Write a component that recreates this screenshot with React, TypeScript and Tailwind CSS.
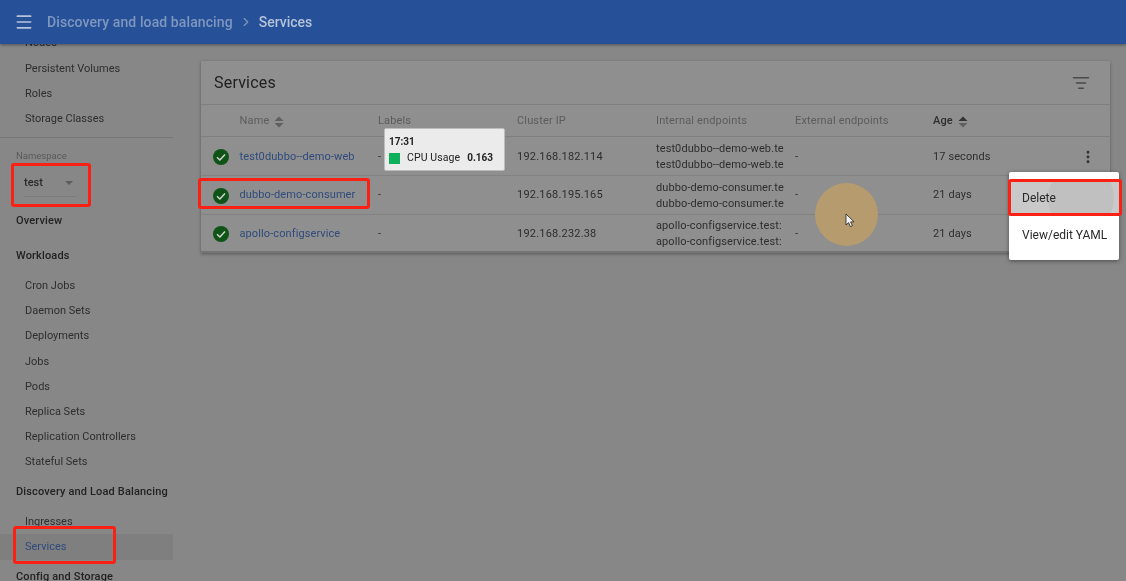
import React from "react";
import { Menu, ChevronRight, ListFilter, EllipsisVertical } from "lucide-react";

const clusterItems = ["Nodes", "Persistent Volumes", "Roles", "Storage Classes"];
const workloadItems = [
  "Cron Jobs",
  "Daemon Sets",
  "Deployments",
  "Jobs",
  "Pods",
  "Replica Sets",
  "Replication Controllers",
  "Stateful Sets",
];

const services = [
  {
    name: "test0dubbo--demo-web",
    ip: "192.168.182.114",
    endpoints: ["test0dubbo--demo-web.te", "test0dubbo--demo-web.te"],
    age: "17 seconds",
  },
  {
    name: "dubbo-demo-consumer",
    ip: "192.168.195.165",
    endpoints: ["dubbo-demo-consumer.te", "dubbo-demo-consumer.te"],
    age: "21 days",
  },
  {
    name: "apollo-configservice",
    ip: "192.168.232.38",
    endpoints: ["apollo-configservice.test:", "apollo-configservice.test:"],
    age: "21 days",
  },
];

const NavItem = ({ label, active }: { label: string; active?: boolean }) => (
  <div
    className={`h-[25.2px] pl-[25px] flex items-center text-[11px] ${
      active ? "bg-[#7f7f7f] text-[#2f4b7c]" : "text-[#2e2e2e]"
    }`}
  >
    {label}
  </div>
);

const NavTitle = ({ label, className }: { label: string; className: string }) => (
  <div className={`pl-[16px] flex items-center text-[11px] font-medium tracking-[0.15px] text-[#222] ${className}`}>
    {label}
  </div>
);

const SortIcon = ({ dark }: { dark?: boolean }) => (
  <svg width="10" height="12" viewBox="0 0 10 12" className="ml-[5px]">
    <path d="M5 0.5 L9.5 5 L0.5 5 Z" fill={dark ? "#333" : "#5f5f5f"} />
    <path d="M5 11.5 L9.5 7 L0.5 7 Z" fill="#5f5f5f" />
  </svg>
);

const StatusIcon = () => (
  <svg width="16" height="16" viewBox="0 0 16 16">
    <circle cx="8" cy="8" r="8" fill="#0f5416" />
    <path d="M4 8.3 L6.9 11 L12 5.6" fill="none" stroke="#d8d8d8" strokeWidth="1.4" />
  </svg>
);

const RedBox = ({ className }: { className: string }) => (
  <div className={`absolute border-[3px] border-[#fb2014] rounded-[3px] ${className}`} />
);

const gridCols = "grid grid-cols-[38.5px_138.5px_139px_139px_139px_138px_1fr]";

const App: React.FC = () => {
  return (
    <div className="relative w-[1126px] h-[581px] overflow-hidden bg-[#878787] font-['Roboto',sans-serif] blur-[0.4px]">
      {/* Top bar */}
      <header className="relative z-10 h-[44px] bg-[#265097] flex items-center shadow-[0_1px_3px_rgba(0,0,0,0.4)]">
        <Menu className="w-[20px] h-[20px] ml-[14px] text-[#b5c3da]" strokeWidth={2} />
        <span className="ml-[13px] text-[14px] font-medium text-[#7f97bf] tracking-[0.1px]">
          Discovery and load balancing
        </span>
        <ChevronRight className="w-[14px] h-[14px] mx-[6px] text-[#7f97bf]" />
        <span className="text-[14px] font-medium text-[#b5c3da]">Services</span>
      </header>

      <div className="flex h-[537px]">
        {/* Sidebar */}
        <nav className="w-[173px] shrink-0 overflow-hidden -mt-[13px]">
          <div>
            {clusterItems.map((item) => (
              <NavItem key={item} label={item} />
            ))}
          </div>
          <div className="mt-[5px] border-t border-[#777]" />
          <div className="pl-[16px] mt-[12px] text-[9.5px] leading-[12px] text-[#5a5a5a]">Namespace</div>
          <div className="ml-[24px] mt-[9px] w-[52px] h-[26px] border-b border-[#7c7c7c] flex items-center justify-between pr-[2px]">
            <span className="text-[11px] font-medium text-[#2a2a2a]">test</span>
            <span className="w-0 h-0 mr-[1px] border-x-[4px] border-x-transparent border-t-[4px] border-t-[#5c5c5c]" />
          </div>
          <NavTitle label="Overview" className="h-[25px] mt-[12px]" />
          <NavTitle label="Workloads" className="h-[25px] mt-[10px]" />
          <div className="mt-[5px]">
            {workloadItems.map((item) => (
              <NavItem key={item} label={item} />
            ))}
          </div>
          <NavTitle label="Discovery and Load Balancing" className="h-[25px] mt-[4px]" />
          <div className="mt-[5px]">
            <NavItem label="Ingresses" />
            <NavItem label="Services" active />
          </div>
          <NavTitle label="Config and Storage" className="h-[25px] mt-[5px]" />
        </nav>

        {/* Main content */}
        <main className="flex-1 pl-[28px] pr-[16px] pt-[17px]">
          <section className="bg-[#8f8f8f] shadow-[0_1px_3px_rgba(0,0,0,0.35)]">
            <div className="h-[44px] pl-[13px] pr-[20px] flex items-center justify-between border-b border-[#7f7f7f]">
              <h2 className="text-[16px] text-[#1e1e1e] tracking-[0.2px]">Services</h2>
              <ListFilter className="w-[18px] h-[18px] text-[#4a4a4a]" strokeWidth={2} />
            </div>
            <div className={`${gridCols} h-[32px] pt-[2px] items-center border-b border-[#7f7f7f] text-[11px] text-[#5c5c5c] tracking-[0.15px]`}>
              <span />
              <span className="flex items-center">
                Name
                <SortIcon />
              </span>
              <span>Labels</span>
              <span>Cluster IP</span>
              <span>Internal endpoints</span>
              <span>External endpoints</span>
              <span className="flex items-center font-medium text-[#2e2e2e]">
                Age
                <SortIcon dark />
              </span>
            </div>
            {services.map((service, index) => (
              <div
                key={service.name}
                className={`${gridCols} h-[38.8px] pt-[2px] items-center text-[11px] text-[#2e2e2e] tracking-[0.1px] ${
                  index < 2 ? "border-b border-[#828282]" : "border-b-2 border-[#757575]"
                }`}
              >
                <span className="pl-[11.5px] flex items-center">
                  <StatusIcon />
                </span>
                <span className="text-[#2f4b7c] whitespace-nowrap">{service.name}</span>
                <span>-</span>
                <span className="tracking-[0.2px]">{service.ip}</span>
                <div className="leading-[15.5px] whitespace-nowrap">
                  {service.endpoints.map((endpoint, i) => (
                    <div key={i}>{endpoint}</div>
                  ))}
                </div>
                <span>-</span>
                <div className="flex items-center justify-between pr-[14px]">
                  <span>{service.age}</span>
                  {index === 0 && <EllipsisVertical className="w-[16px] h-[16px] text-[#333]" strokeWidth={2.4} />}
                </div>
              </div>
            ))}
          </section>
        </main>
      </div>

      {/* Chart tooltip left over the table */}
      <div className="absolute left-[384px] top-[128px] w-[121px] h-[43px] rounded-[2px] bg-[#ebebeb] border border-[#bdbdbd] pl-[4px] pt-[7px] text-[10.5px] text-[#222]">
        <div className="font-bold text-[10px] leading-[12px]">17:31</div>
        <div className="flex items-center mt-[4px] leading-[12px]">
          <span className="w-[11px] h-[11px] bg-[#0cb05a]" />
          <span className="ml-[7px] tracking-[0.1px]">CPU Usage</span>
          <span className="ml-[7px] font-bold text-[10px]">0.163</span>
        </div>
      </div>

      {/* Click highlight and cursor */}
      <div className="absolute left-[815px] top-[183px] w-[63px] h-[63px] rounded-full bg-[#b59b6e]" />
      <svg className="absolute left-[845px] top-[213px]" width="11" height="15" viewBox="0 0 11 15">
        <path d="M1 1 L1 12 L3.6 9.6 L5.4 13.6 L7.4 12.7 L5.6 8.9 L9 8.8 Z" fill="#f2f2f2" stroke="#222" strokeWidth="0.8" />
      </svg>

      {/* Row menu */}
      <div className="absolute left-[1009px] top-[172px] w-[110px] h-[88px] bg-white rounded-[2px] py-[8px] shadow-[0_1px_4px_rgba(0,0,0,0.45)] text-[12px] text-[#2a2a2a]">
        <div className="relative h-[36px] bg-[#c9c9c9] overflow-hidden flex items-center pl-[13px]">
          <span className="absolute left-[39px] top-[-15px] w-[66px] h-[66px] rounded-full bg-[#c0c0c0]" />
          <span className="relative">Delete</span>
        </div>
        <div className="h-[38px] flex items-center pl-[13px] whitespace-nowrap">View/edit YAML</div>
      </div>

      {/* Red annotation boxes */}
      <RedBox className="left-[11px] top-[163px] w-[80px] h-[44px]" />
      <RedBox className="left-[198px] top-[178px] w-[172px] h-[31px]" />
      <RedBox className="left-[13px] top-[526px] w-[103px] h-[38px]" />
      <RedBox className="left-[1008px] top-[179px] w-[114px] h-[37px]" />
    </div>
  );
};

export default App;
